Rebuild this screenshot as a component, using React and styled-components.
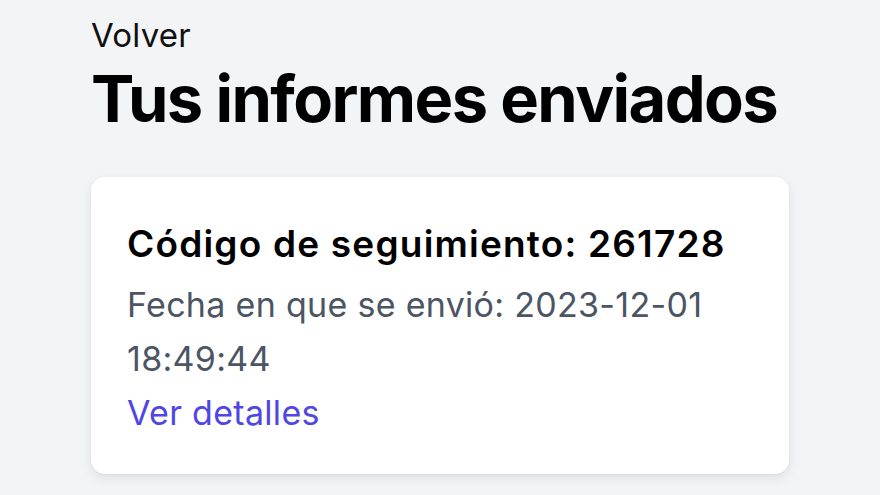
import React from 'react';
import styled, { createGlobalStyle } from 'styled-components';

const GlobalStyle = createGlobalStyle`
  body {
    margin: 0;
    background: #f3f4f6;
    font-family: Inter, "Noto Sans", sans-serif;
    -webkit-font-smoothing: antialiased;
  }
`;

const Page = styled.main`
  min-height: 495px;
  padding: 15px 0 0 91px;
  box-sizing: border-box;
`;

const BackLink = styled.a`
  display: block;
  font-size: 33px;
  line-height: 40px;
  letter-spacing: 0.2px;
  color: #111;
  text-decoration: none;
  cursor: pointer;
`;

const Title = styled.h1`
  margin: 8px 0 0;
  font-size: 65px;
  line-height: 72px;
  font-weight: 700;
  letter-spacing: -1.6px;
  color: #000;
`;

const Card = styled.section`
  margin-top: 42px;
  width: 698px;
  box-sizing: border-box;
  padding: 45px 36px 34px 36px;
  background: #fff;
  border-radius: 14px;
  box-shadow: 0 4px 12px rgba(0, 0, 0, 0.08), 0 1px 3px rgba(0, 0, 0, 0.05);
`;

const CardTitle = styled.h2`
  margin: 0;
  font-size: 37px;
  line-height: 44px;
  font-weight: 600;
  letter-spacing: 1.2px;
  color: #000;
`;

const Meta = styled.p`
  margin: 12px 0 0;
  font-size: 34px;
  line-height: 54px;
  letter-spacing: 0.3px;
  color: #4b5563;
`;

const Details = styled.a`
  display: block;
  font-size: 34px;
  line-height: 54px;
  letter-spacing: 0.3px;
  color: #4f46e5;
  text-decoration: none;
  cursor: pointer;
`;

const reports = [
  { code: '261728', sent: '2023-12-01 18:49:44' },
];

export default function App() {
  return (
    <>
      <GlobalStyle />
      <Page>
        <BackLink>Volver</BackLink>
        <Title>Tus informes enviados</Title>
        {reports.map((r) => (
          <Card key={r.code}>
            <CardTitle>{`Código de seguimiento: ${r.code}`}</CardTitle>
            <Meta>{`Fecha en que se envió: ${r.sent}`}</Meta>
            <Details>Ver detalles</Details>
          </Card>
        ))}
      </Page>
    </>
  );
}
